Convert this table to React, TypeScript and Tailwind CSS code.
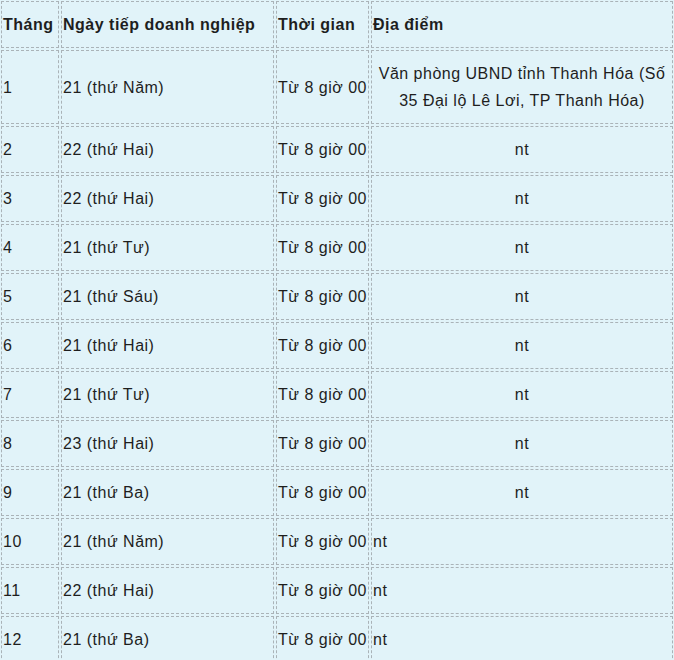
const rows: [string, string, string, string, boolean][] = [
  ["1", "21 (thứ Năm)", "Từ 8 giờ 00", "Văn phòng UBND tỉnh Thanh Hóa (Số 35 Đại lộ Lê Lơi, TP Thanh Hóa)", true],
  ["2", "22 (thứ Hai)", "Từ 8 giờ 00", "nt", true],
  ["3", "22 (thứ Hai)", "Từ 8 giờ 00", "nt", true],
  ["4", "21 (thứ Tư)", "Từ 8 giờ 00", "nt", true],
  ["5", "21 (thứ Sáu)", "Từ 8 giờ 00", "nt", true],
  ["6", "21 (thứ Hai)", "Từ 8 giờ 00", "nt", true],
  ["7", "21 (thứ Tư)", "Từ 8 giờ 00", "nt", true],
  ["8", "23 (thứ Hai)", "Từ 8 giờ 00", "nt", true],
  ["9", "21 (thứ Ba)", "Từ 8 giờ 00", "nt", true],
  ["10", "21 (thứ Năm)", "Từ 8 giờ 00", "nt", false],
  ["11", "22 (thứ Hai)", "Từ 8 giờ 00", "nt", false],
  ["12", "21 (thứ Ba)", "Từ 8 giờ 00", "nt", false],
];

const cell =
  "border border-dashed border-[#aab3b8] px-px py-[9px] align-middle leading-[27px]";

export default function App() {
  return (
    <div className="w-[674px] h-[660px] overflow-hidden bg-[#e1f3f9] text-[16px] tracking-[0.5px] text-[#1e1e1e] font-['Liberation_Sans',Arial,sans-serif]">
      <table className="-mt-px -ml-px table-fixed border-separate border-spacing-[2px] w-[676px]">
        <colgroup>
          <col className="w-[58px]" />
          <col className="w-[213px]" />
          <col className="w-[93px]" />
          <col className="w-[302px]" />
        </colgroup>
        <thead>
          <tr>
            <th className={`${cell} text-left font-bold`}>Tháng</th>
            <th className={`${cell} text-left font-bold`}>Ngày tiếp doanh nghiệp</th>
            <th className={`${cell} text-left font-bold`}>Thời gian</th>
            <th className={`${cell} text-left font-bold`}>Địa điểm</th>
          </tr>
        </thead>
        <tbody>
          {rows.map(([m, d, t, p, center]) => (
            <tr key={m}>
              <td className={cell}>{m}</td>
              <td className={cell}>{d}</td>
              <td className={`${cell} whitespace-nowrap`}>{t}</td>
              <td className={`${cell} ${center ? "text-center" : "text-left"}`}>{p}</td>
            </tr>
          ))}
        </tbody>
      </table>
    </div>
  );
}
